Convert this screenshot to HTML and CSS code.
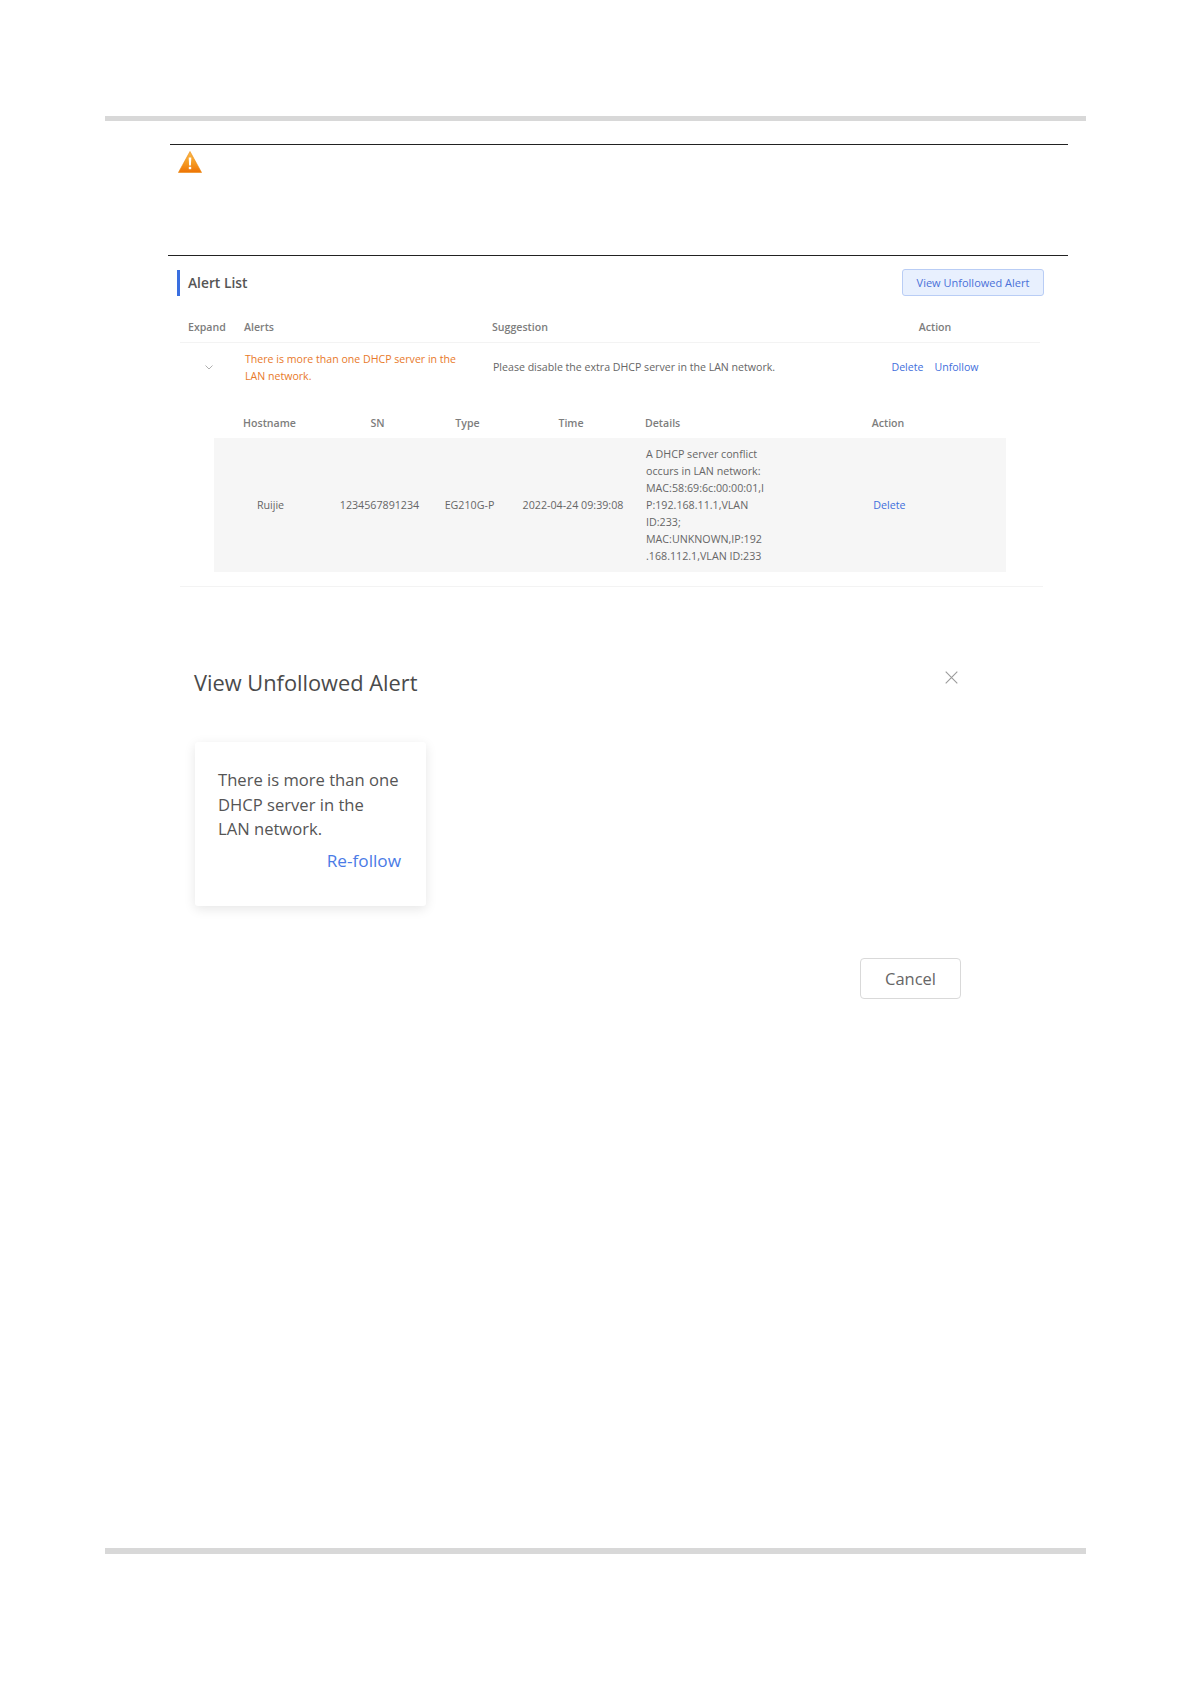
FILE: index.html
```html
<!DOCTYPE html>
<html lang="en">
<head>
<meta charset="utf-8">
<title>Alert List</title>
<link rel="stylesheet" href="styles.css">
</head>
<body>
<div class="page">
  <div class="bar bar-top"></div>
  <div class="notice">
    <svg class="warn" viewBox="0 0 24 22" width="24" height="22" aria-hidden="true">
      <defs>
        <linearGradient id="wg" x1="0" y1="0" x2="0" y2="1">
          <stop offset="0" stop-color="#f9b84a"/>
          <stop offset="0.55" stop-color="#f59a22"/>
          <stop offset="1" stop-color="#ee7304"/>
        </linearGradient>
      </defs>
      <path d="M12 0.5 L23.6 21.5 H0.4 Z" fill="url(#wg)" stroke="#ec8a12" stroke-width="0.6" stroke-linejoin="round"/>
      <path d="M10.7 6.5 H13.3 L12.9 14.5 H11.1 Z" fill="#fff"/>
      <rect x="10.8" y="15.8" width="2.4" height="2.4" fill="#fff"/>
    </svg>
  </div>
  <section class="alerts">
    <div class="alerts-head">
      <h2 class="alerts-title">Alert List</h2>
      <button class="btn-soft">View Unfollowed Alert</button>
    </div>
    <div class="grid-main grid-head">
      <div class="pl">Expand</div>
      <div>Alerts</div>
      <div>Suggestion</div>
      <div class="center">Action</div>
    </div>
    <div class="grid-main grid-row">
      <div class="chev">
        <svg viewBox="0 0 8 5" width="8" height="5" aria-hidden="true"><path d="M0.5 0.5 L4 4 L7.5 0.5" fill="none" stroke="#9a9a9a" stroke-width="0.8"/></svg>
      </div>
      <div class="alert-text">There is more than one DHCP server in the<br>LAN network.</div>
      <div class="suggest">Please disable the extra DHCP server in the LAN network.</div>
      <div class="center links"><a class="link">Delete</a><a class="link">Unfollow</a></div>
    </div>
    <div class="sub">
      <div class="grid-sub sub-head">
        <div class="center">Hostname</div>
        <div class="center">SN</div>
        <div class="center">Type</div>
        <div class="center">Time</div>
        <div class="pl">Details</div>
        <div class="center">Action</div>
      </div>
      <div class="grid-sub sub-row">
        <div class="center">Ruijie</div>
        <div class="center">1234567891234</div>
        <div class="center">EG210G-P</div>
        <div class="center">2022-04-24 09:39:08</div>
        <div class="details">A DHCP server conflict<br>occurs in LAN network:<br>MAC:58:69:6c:00:00:01,I<br>P:192.168.11.1,VLAN<br>ID:233;<br>MAC:UNKNOWN,IP:192<br>.168.112.1,VLAN ID:233</div>
        <div class="center"><a class="link">Delete</a></div>
      </div>
    </div>
  </section>
  <section class="dialog">
    <div class="dialog-head">
      <h2 class="dialog-title">View Unfollowed Alert</h2>
      <svg class="close" viewBox="0 0 13 13" width="13" height="13" aria-hidden="true"><path d="M0.7 0.7 L12.3 12.3 M12.3 0.7 L0.7 12.3" stroke="#9b9b9b" stroke-width="1.1" fill="none"/></svg>
    </div>
    <div class="card">
      <p class="card-text">There is more than one<br>DHCP server in the<br>LAN network.</p>
      <a class="refollow">Re-follow</a>
    </div>
    <div class="dialog-foot"><button class="btn-cancel">Cancel</button></div>
  </section>
  <div class="bar bar-bottom"></div>
</div>
</body>
</html>
```

FILE: styles.css
```css
* { box-sizing: border-box; }
html, body { margin: 0; padding: 0; background: #fff; }
body { font-family: "Open Sans", "Noto Sans", sans-serif; color: #555; }
.page { width: 1191px; height: 1684px; padding-top: 116px; overflow: hidden; }
.bar { height: 5px; width: 981px; margin-left: 105px; background: #d8d8d8; }
.notice { margin: 23px 0 0 170px; width: 898px; height: 111px; border-top: 1px solid #222; padding: 6px 0 0 8px; }
.warn { display: block; }
.alerts { margin-left: 168px; width: 900px; border-top: 1px solid #222; padding-bottom: 16px; }
.alerts::after { content: ""; display: block; margin-left: 12px; width: 863px; border-bottom: 1px solid #f3f3f3; }
.alerts-head { display: flex; justify-content: space-between; align-items: center; margin: 13px 24px 0 9px; height: 27px; }
.alerts-title { margin: 0; font-size: 13.8px; line-height: 26px; font-weight: 600; color: #555; border-left: 3px solid #3a6fe0; padding-left: 8px; }
.btn-soft { width: 142px; height: 27px; padding: 0 0 1px; font: 11px "Open Sans", sans-serif; color: #4a70d8; background: #e8f0fe; border: 1px solid #b9cdf5; border-radius: 3px; }
.grid-main { display: grid; grid-template-columns: 64px 248px 368px 150px; margin-left: 12px; width: 860px; font-size: 10.6px; }
.grid-head { height: 31px; margin-top: 16px; align-items: center; font-weight: 600; color: #7d7d7d; border-bottom: 1px solid #f3f3f3; }
.grid-row { height: 50px; align-items: center; color: #666; }
.grid-row > .alert-text { padding-left: 1px; }
.grid-row > .suggest { padding: 0 0 2px 1px; }
.pl { padding-left: 8px; }
.center { text-align: center; }
.chev { display: flex; justify-content: center; padding: 0 7px 2px 0; }
.alert-text { color: #e8792a; line-height: 17px; }
.links { display: flex; justify-content: center; gap: 11px; padding-bottom: 2px; }
.link { color: #3f6fdc; }
.sub { margin: 14px 0 14px 46px; width: 792px; font-size: 10.7px; }
.grid-sub { display: grid; align-items: center; }
.sub-head { grid-template-columns: 111px 105px 75px 132px 133px 236px; height: 31px; font-size: 10.6px; font-weight: 600; color: #7d7d7d; }
.sub-row { grid-template-columns: 113px 105px 75px 132px 134px 233px; height: 134px; background: #f6f6f6; color: #666; }
.details { padding-left: 7px; line-height: 17px; }
.dialog { margin: 66px 0 0 194px; width: 767px; }
.dialog-head { display: flex; justify-content: space-between; align-items: flex-start; height: 73px; padding-right: 3px; }
.dialog-title { margin: 0; font-size: 21.8px; line-height: 28px; font-weight: 400; color: #4a4a4a; }
.close { margin-top: 2px; }
.card { width: 231px; height: 164px; margin-left: 1px; padding: 26px 25px 0 23px; background: #fff; border-radius: 3px; box-shadow: 0 3px 12px rgba(0,0,0,.1); }
.card-text { margin: 0; font-size: 16.6px; line-height: 24.5px; color: #555; }
.refollow { display: block; margin-top: 7px; text-align: right; font-size: 17.2px; line-height: 24px; color: #4a7be6; }
.dialog-foot { display: flex; justify-content: flex-end; margin-top: 52px; }
.btn-cancel { width: 101px; height: 41px; padding: 0; font: 16.5px "Open Sans", sans-serif; color: #666; background: #fff; border: 1px solid #d9d9d9; border-radius: 4px; }
.bar-bottom { height: 6px; margin-top: 549px; }
```
